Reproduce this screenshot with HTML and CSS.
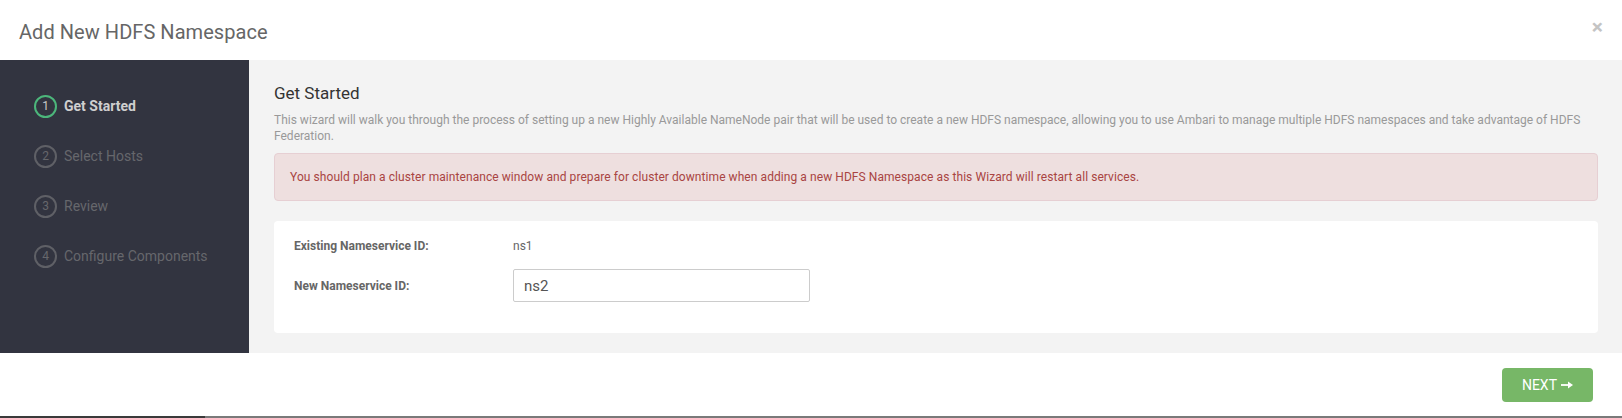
FILE: index.html
```html
<!DOCTYPE html>
<html lang="en">
<head>
<meta charset="utf-8">
<title>Add New HDFS Namespace</title>
<link rel="stylesheet" href="styles.css">
</head>
<body>
<div class="modal">
  <header class="modal-header">
    <h4 class="modal-title">Add New HDFS Namespace</h4>
    <button class="close" type="button">×</button>
  </header>
  <div class="modal-body">
    <nav class="steps">
      <div class="step active"><span class="num">1</span><span class="label">Get Started</span></div>
      <div class="step"><span class="num">2</span><span class="label">Select Hosts</span></div>
      <div class="step"><span class="num">3</span><span class="label">Review</span></div>
      <div class="step"><span class="num">4</span><span class="label">Configure Components</span></div>
    </nav>
    <main class="content">
      <h3 class="heading">Get Started</h3>
      <p class="intro">This wizard will walk you through the process of setting up a new Highly Available NameNode pair that will be used to create a new HDFS namespace, allowing you to use Ambari to manage multiple HDFS namespaces and take advantage of HDFS Federation.</p>
      <div class="alert">You should plan a cluster maintenance window and prepare for cluster downtime when adding a new HDFS Namespace as this Wizard will restart all services.</div>
      <div class="card">
        <div class="row">
          <span class="field-label">Existing Nameservice ID:</span>
          <span class="field-value">ns1</span>
        </div>
        <div class="row">
          <span class="field-label">New Nameservice ID:</span>
          <input class="field-input" type="text" value="ns2">
        </div>
      </div>
    </main>
  </div>
  <footer class="modal-footer">
    <button class="next" type="button">NEXT <svg class="arrow" width="12" height="8" viewBox="0 0 12 8" aria-hidden="true"><rect x="0" y="3.1" width="8" height="1.8" fill="#fff"/><polygon points="7,0.5 12,4 7,7.5" fill="#fff"/></svg></button>
  </footer>
  <div class="bottom-line"></div>
</div>
</body>
</html>
```

FILE: styles.css
```css
* { box-sizing: border-box; }

html, body {
  margin: 0;
  padding: 0;
  background: #ffffff;
}

body {
  font-family: Roboto, "Liberation Sans", Arial, sans-serif;
  color: #333;
}

.modal {
  width: 1622px;
  height: 418px;
  display: flex;
  flex-direction: column;
  background: #fff;
}

.modal-header {
  height: 60px;
  display: flex;
  align-items: flex-start;
  padding: 20px 19px 0 19px;
}

.modal-title {
  margin: 0;
  font-size: 20px;
  line-height: 24px;
  font-weight: 400;
  color: #666;
  letter-spacing: 0.05px;
}

.close {
  margin-left: auto;
  margin-top: -3px;
  padding: 0;
  border: 0;
  background: transparent;
  font-family: Roboto, "Liberation Sans", Arial, sans-serif;
  font-size: 21px;
  line-height: 21px;
  font-weight: 700;
  color: #c4c4c4;
}

.modal-body {
  height: 293px;
  display: flex;
}

.steps {
  width: 249px;
  flex: none;
  background: #323440;
  padding-top: 21px;
}

.step {
  height: 50px;
  display: flex;
  align-items: center;
  padding-left: 34px;
  gap: 7px;
}

.num {
  width: 23px;
  height: 23px;
  border-radius: 50%;
  border: 2px solid #5f6066;
  display: flex;
  align-items: center;
  justify-content: center;
  font-size: 12px;
  color: #66676c;
}

.label {
  font-size: 14px;
  color: #66676c;
}

.step.active .num {
  border-color: #4cb67b;
  color: #c9c9c9;
}

.step.active .label {
  font-weight: 700;
  color: #cfcfcf;
}

.content {
  flex: 1;
  background: #f3f3f3;
  padding: 23px 24px 0 25px;
}

.heading {
  margin: 0;
  font-size: 17px;
  line-height: 20px;
  font-weight: 400;
  color: #333;
}

.intro {
  margin: 9px 0 0 0;
  font-size: 12px;
  line-height: 16px;
  color: #999;
}

.alert {
  margin-top: 9px;
  padding: 15px 15px;
  border: 1px solid #e6cfd3;
  border-radius: 4px;
  background: #eedfdf;
  color: #a94442;
  font-size: 12px;
  line-height: 16px;
  letter-spacing: 0.07px;
}

.card {
  margin-top: 20px;
  height: 112px;
  background: #fff;
  border-radius: 4px;
  padding: 15px 20px;
  display: flex;
  flex-direction: column;
  gap: 13px;
}

.row {
  display: flex;
  align-items: center;
  min-height: 20px;
}

.field-label {
  width: 219px;
  flex: none;
  font-size: 12px;
  line-height: 20px;
  font-weight: 700;
  color: #666;
}

.field-value {
  font-size: 12px;
  line-height: 20px;
  color: #666;
}

.field-input {
  width: 297px;
  height: 33px;
  border: 1px solid #cccccc;
  border-radius: 2px;
  padding: 0 10px;
  font-family: Roboto, "Liberation Sans", Arial, sans-serif;
  font-size: 15px;
  color: #555;
  background: #fff;
}

.modal-footer {
  height: 63px;
  display: flex;
  justify-content: flex-end;
  align-items: flex-start;
  padding: 15px 29px 0 0;
}

.next {
  height: 34px;
  padding: 0 20px;
  border: 0;
  border-radius: 4px;
  background: #77b767;
  color: #fff;
  font-family: Roboto, "Liberation Sans", Arial, sans-serif;
  font-size: 14px;
  line-height: 34px;
  display: flex;
  align-items: center;
  gap: 4px;
}

.arrow {
  display: block;
}

.bottom-line {
  height: 2px;
  background: linear-gradient(to right, #3a3a3a 0, #3a3a3a 205px, #7a7a7a 205px, #7a7a7a 100%);
}
```
